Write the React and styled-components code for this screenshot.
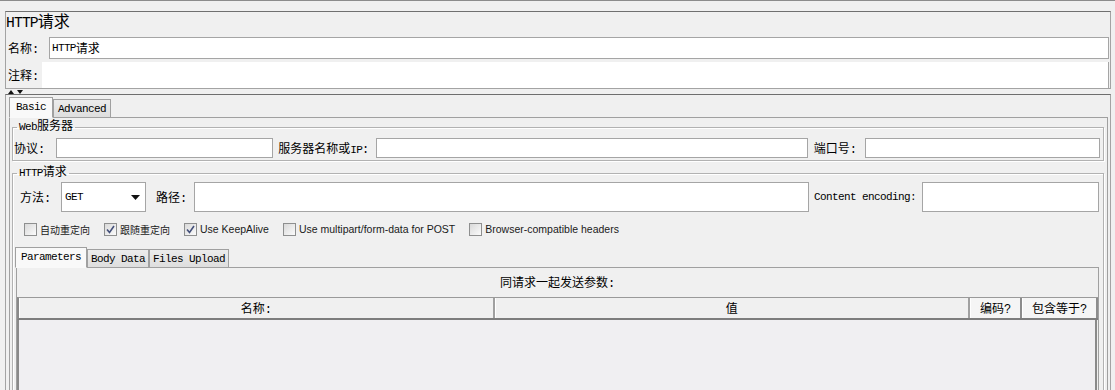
import React from 'react';
import styled, { createGlobalStyle } from 'styled-components';

const GlobalStyle = createGlobalStyle`
  html, body { margin: 0; padding: 0; background: #f0f0f0; overflow: hidden; }
  body {
    font-family: "Liberation Mono", "Noto Sans CJK SC", monospace;
    font-size: 12px;
    color: #000;
  }
  * { box-sizing: border-box; }
`;

// latin run inside cjk text (SimSun-like narrow serif)
const Lat = styled.span`
  font-family: "Liberation Mono", monospace;
  font-size: 0.92em;
  letter-spacing: -0.06em;
`;

const Page = styled.div`
  height: 400px;
  border-top: 1px solid #8c8c8c;
  padding: 0 4px 0 5px;
  display: flex;
  flex-direction: column;
`;

/* ---- top name / comment panel ---- */
const NamePanel = styled.section`
  margin-top: 10px;
  border: 1px solid #a3a3a3;
  border-top-color: #707070;
  display: flex;
  flex-direction: column;
`;

const Title = styled.div`
  height: 23px;
  line-height: 23px;
  font-size: 16px;
  white-space: nowrap;
`;

const FieldRow = styled.div`
  display: flex;
  height: ${p => p.$h}px;
  margin-top: ${p => p.$mt || 0}px;
`;

const RowLabel = styled.label`
  width: ${p => p.$w}px;
  padding-left: 2px;
  display: flex;
  align-items: center;
  flex-shrink: 0;
`;

const TextBox = styled.div`
  flex: 1;
  margin-right: 1px;
  background: #fff;
  border: ${p => (p.$bare ? 'none' : '1px solid #a5a5a5')};
  border-right: 1px solid #a5a5a5;
  padding-left: 2px;
  display: flex;
  align-items: center;
`;

const Splitter = styled.div`
  height: 5px;
  display: flex;
  align-items: flex-end;
  padding-left: 2px;
`;

/* ---- tabbed area ---- */
const MainPanel = styled.section`
  flex: 1;
  border-top: 1px solid #6e6e6e;
  border-left: 1px solid #a3a3a3;
  border-right: 1px solid #a3a3a3;
  padding: 2px 2px 0 3px;
  display: flex;
  flex-direction: column;
  min-height: 0;
`;

const TabStrip = styled.div`
  display: flex;
  align-items: flex-end;
  height: 21px;
  margin: ${p => p.$mt || 0}px 0 -1px ${p => p.$ml || 0}px;
  position: relative;
  z-index: 1;
`;

const Tab = styled.div`
  height: ${p => (p.$active ? 21 : 19)}px;
  padding: 0 ${p => p.$pad || 6}px ${p => (p.$active ? 2 : 0)}px;
  border: 1px solid #a0a0a0;
  border-bottom-color: ${p => (p.$active ? '#f9f9f9' : '#a0a0a0')};
  background: ${p => (p.$active ? '#f9f9f9' : 'linear-gradient(#ececec, #dedede)')};
  font-family: "Liberation Mono", monospace;
  font-size: 11px;
  letter-spacing: -0.6px;
  display: flex;
  align-items: center;
  white-space: nowrap;
`;

const TabPane = styled.div`
  flex: 1;
  border: 1px solid #a0a0a0;
  border-bottom: none;
  padding: 2px 3px 0 2px;
  display: flex;
  flex-direction: column;
  min-height: 0;
`;

const Group = styled.fieldset`
  margin: ${p => p.$mt || 0}px 0 0;
  padding: 0 3px 2px 1px;
  border: 1px solid #b2b2b2;
  box-shadow: inset 1px 1px 0 #fff, 1px 1px 0 #fff;
  min-width: 0;
  display: flex;
  flex-direction: column;
  ${p => p.$grow && 'flex: 1;'}
`;

const Legend = styled.legend`
  margin-left: 3px;
  padding: 0 2px;
  line-height: 14px;
  font-size: 12px;
`;

const InputRow = styled.div`
  display: flex;
  align-items: center;
  height: ${p => p.$h}px;
  margin-top: ${p => p.$mt}px;
`;

const Label = styled.span`
  flex-shrink: 0;
  white-space: nowrap;
  width: ${p => (p.$w ? `${p.$w}px` : 'auto')};
  padding-left: ${p => p.$pl || 0}px;
  margin: 0 ${p => p.$mr || 0}px 0 ${p => p.$ml || 0}px;
  font-size: ${p => (p.$small ? '11px' : '12px')};
  letter-spacing: ${p => (p.$small ? '-0.6px' : 'normal')};
`;

const Input = styled.div`
  flex: ${p => p.$flex} 1 0;
  height: 100%;
  background: #fff;
  border: 1px solid #a5a5a5;
  margin-right: ${p => p.$mr || 0}px;
`;

const Select = styled.div`
  width: 85px;
  height: 100%;
  flex-shrink: 0;
  background: #fff;
  border: 1px solid #a5a5a5;
  display: flex;
  align-items: center;
  justify-content: space-between;
  padding: 0 5px 0 3px;
  font-family: "Liberation Mono", monospace;
  font-size: 11px;
  letter-spacing: -0.6px;
`;

const OptionRow = styled.div`
  display: flex;
  align-items: center;
  gap: 14px;
  height: 14px;
  margin: 10px 0 0 10px;
`;

const Option = styled.label`
  display: flex;
  align-items: center;
  gap: 3px;
  white-space: nowrap;
  font-family: ${p => (p.$cjk ? '"Noto Sans CJK SC", sans-serif' : '"Liberation Sans", sans-serif')};
  font-size: ${p => (p.$cjk ? '10px' : '10.5px')};
  color: #1a1a1a;
`;

const Box = styled.span`
  width: 13px;
  height: 13px;
  border: 1px solid #8e8f8f;
  background: linear-gradient(135deg, #d9d9d9, #fbfbfb);
  display: inline-flex;
  align-items: center;
  justify-content: center;
`;

/* ---- parameters table ---- */
const ParamPanel = styled.div`
  flex: 1;
  margin: 0 1px 0 2px;
  border: 1px solid #a0a0a0;
  display: flex;
  flex-direction: column;
`;

const Caption = styled.div`
  text-align: center;
  height: 14px;
  line-height: 14px;
  margin: 9px 0 6px;
`;

const TableHead = styled.div`
  display: grid;
  grid-template-columns: 1fr 1fr 52px 76px;
  height: 23px;
  border-top: 1px solid #9a9a9a;
  border-bottom: 2px solid #7d7d7d;
  border-left: 2px solid #8a8a8a;
`;

const HeadCell = styled.div`
  display: flex;
  align-items: center;
  justify-content: center;
  background: ${p => (p.$raised ? '#f5f5f5' : '#f0f0f0')};
  border-left: 1px solid #fff;
  border-right: 2px solid ${p => (p.$raised ? '#8c8c8c' : '#a0a0a0')};
  white-space: nowrap;
`;

const TableBody = styled.div`
  flex: 1;
  background: #f0eff2;
  border-left: 2px solid #8a8a8a;
  border-right: 2px solid #8a8a8a;
  margin-right: 1px;
`;

const Check = () => (
  <svg width="9" height="9" viewBox="0 0 9 9">
    <path d="M1 4.5 L3.5 7.5 L8 1" fill="none" stroke="#44507a" strokeWidth="1.6" />
  </svg>
);

const CheckOption = ({ checked, cjk, children }) => (
  <Option $cjk={cjk}>
    <Box>{checked && <Check />}</Box>
    {children}
  </Option>
);

export default function App() {
  return (
    <>
      <GlobalStyle />
      <Page>
        <NamePanel>
          <Title><Lat>HTTP</Lat>请求</Title>
          <FieldRow $h={22} $mt={2}>
            <RowLabel $w={43}>名称:</RowLabel>
            <TextBox><Lat>HTTP</Lat>请求</TextBox>
          </FieldRow>
          <FieldRow $h={26} $mt={3}>
            <RowLabel $w={36}>注释:</RowLabel>
            <TextBox $bare />
          </FieldRow>
        </NamePanel>

        <Splitter>
          <svg width="18" height="5" viewBox="0 0 18 5">
            <path d="M1 5 L4 1 L7 5 Z" fill="#111" />
            <path d="M10 1 L16 1 L13 5 Z" fill="#111" />
          </svg>
        </Splitter>

        <MainPanel>
          <TabStrip>
            <Tab $active>Basic</Tab>
            <Tab $pad={4}>Advanced</Tab>
          </TabStrip>
          <TabPane>
            <Group>
              <Legend><Lat>Web</Lat>服务器</Legend>
              <InputRow $h={20} $mt={4}>
                <Label $w={42}>协议:</Label>
                <Input $flex={215} />
                <Label $ml={5} $mr={7}>服务器名称或<Lat>IP</Lat>:</Label>
                <Input $flex={429} />
                <Label $ml={6} $mr={8}>端口号:</Label>
                <Input $flex={233} $mr={0} />
              </InputRow>
            </Group>

            <Group $mt={5} $grow>
              <Legend><Lat>HTTP</Lat>请求</Legend>
              <InputRow $h={30} $mt={2}>
                <Label $w={47} $pl={6}>方法:</Label>
                <Select>
                  GET
                  <svg width="9" height="5" viewBox="0 0 9 5"><path d="M0 0 H9 L4.5 5 Z" fill="#111" /></svg>
                </Select>
                <Label $ml={10} $mr={7}>路径:</Label>
                <Input $flex={613} />
                <Label $ml={5} $mr={6} $small>Content encoding:</Label>
                <Input $flex={175} $mr={1} />
              </InputRow>

              <OptionRow>
                <CheckOption cjk>自动重定向</CheckOption>
                <CheckOption cjk checked>跟随重定向</CheckOption>
                <CheckOption checked>Use KeepAlive</CheckOption>
                <CheckOption>Use multipart/form-data for POST</CheckOption>
                <CheckOption>Browser-compatible headers</CheckOption>
              </OptionRow>

              <TabStrip $mt={11} $ml={1}>
                <Tab $active $pad={5}>Parameters</Tab>
                <Tab $pad={3}>Body Data</Tab>
                <Tab $pad={3}>Files Upload</Tab>
              </TabStrip>
              <ParamPanel>
                <Caption>同请求一起发送参数:</Caption>
                <TableHead>
                  <HeadCell>名称:</HeadCell>
                  <HeadCell>值</HeadCell>
                  <HeadCell $raised>编码?</HeadCell>
                  <HeadCell $raised>包含等于?</HeadCell>
                </TableHead>
                <TableBody />
              </ParamPanel>
            </Group>
          </TabPane>
        </MainPanel>
      </Page>
    </>
  );
}
